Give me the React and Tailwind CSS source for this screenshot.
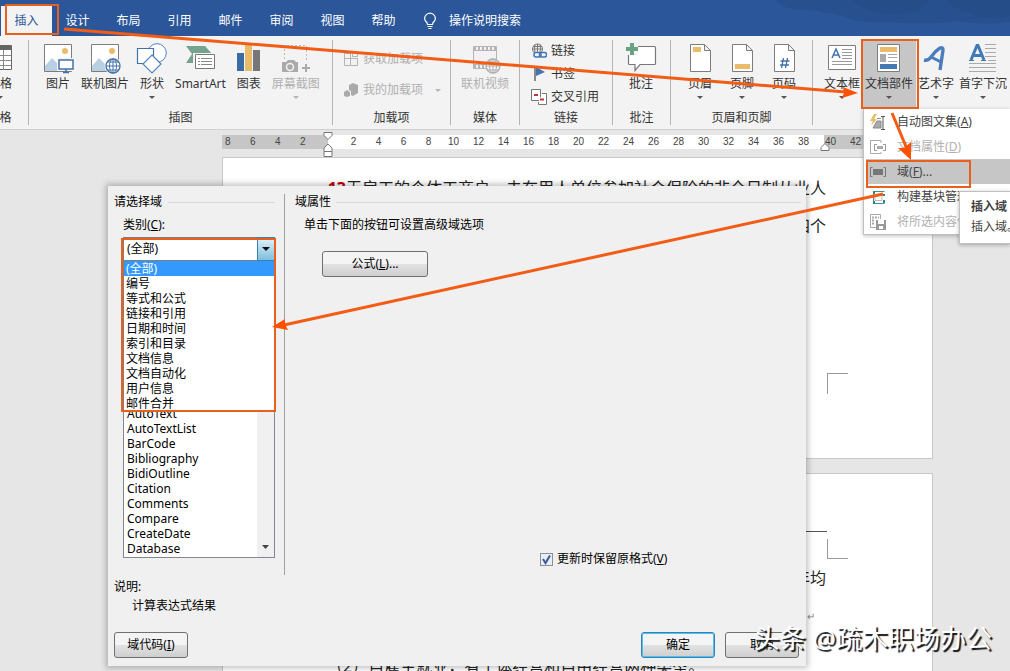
import React from 'react';

const tabs = ['插入', '设计', '布局', '引用', '邮件', '审阅', '视图', '帮助'];

const categories = [
  '(全部)', '编号', '等式和公式', '链接和引用', '日期和时间',
  '索引和目录', '文档信息', '文档自动化', '用户信息', '邮件合并'
];

const fields = [
  'AutoText', 'AutoTextList', 'BarCode', 'Bibliography', 'BidiOutline',
  'Citation', 'Comments', 'Compare', 'CreateDate', 'Database'
];

const rulerMain = Array.from({ length: 19 }, (_, i) => (i + 1) * 2);

function Caret({ dim }) {
  return (
    <svg width="6" height="3" viewBox="0 0 6 3" className="mt-1">
      <path d="M0 0h6L3 3z" fill={dim ? '#b5b5b5' : '#555'} />
    </svg>
  );
}

function Icon({ children }) {
  return (
    <svg width="32" height="32" viewBox="0 0 32 32" fill="none" className="-mx-1 shrink-0">
      {children}
    </svg>
  );
}

function RibbonButton({ icon, label, caret, dim, active }) {
  return (
    <button
      className={`flex flex-col items-center pt-[3px] leading-[17px] whitespace-nowrap ${
        active ? 'bg-[#c6c6c6] px-[3px] -mx-[3px]' : ''
      } ${dim ? 'text-[#b0b0b0]' : 'text-[#333]'}`}
    >
      <Icon>{icon}</Icon>
      <span>{label}</span>
      {caret && <Caret dim={dim} />}
    </button>
  );
}

function Group({ label, className, children }) {
  return (
    <div className={`my-1 flex flex-col ${className}`}>
      <div className="flex h-[68px]">{children}</div>
      <p className="pt-[3px] leading-[14px] text-center text-[#333]">{label}</p>
    </div>
  );
}

function SmallButton({ icon, label, dim, caret }) {
  return (
    <button className={`flex items-center gap-1 leading-4 ${dim ? 'text-[#b0b0b0]' : 'text-[#333]'}`}>
      <svg width="16" height="16" viewBox="0 0 16 16" fill="none">{icon}</svg>
      {label}
      {caret && (
        <svg width="6" height="3" viewBox="0 0 6 3" className="ml-2">
          <path d="M0 0h6L3 3z" fill="#b5b5b5" />
        </svg>
      )}
    </button>
  );
}

const page = <path d="M6.500 1.500h14l6 6v21h-20zM20.500 1.500v6h6" fill="#fff" stroke="#7d7d7d" />;

const icons = {
  table: (
    <>
      <path d="M.5 2.500h27v24h-27z" fill="#fff" stroke="#666" />
      <path d="M1 3h26v4H1z" fill="#666" />
      <path d="M1 12.500h26M1 17.500h26M1 22.500h26M10.500 7v20M19.500 7v20" stroke="#8a8a8a" />
    </>
  ),
  image: (
    <>
      <path d="M2.500 1.500h27v27h-27z" fill="#fff" stroke="#7d7d7d" />
      <circle cx="23" cy="8" r="3" fill="#eabb6a" />
      <path d="M3 28V23l7-8 8 8v5z" fill="#b9d0e4" />
      <path d="M15 15h18v13H15z" fill="#f3f3f3" />
      <path d="M17 17h14v9H17z" fill="#fff" stroke="#4472a8" strokeWidth="1.500" />
      <path d="M24 26v3M21 29.500h6" stroke="#4472a8" strokeWidth="1.500" />
    </>
  ),
  online: (
    <>
      <path d="M2.500 1.500h27v27h-27z" fill="#fff" stroke="#7d7d7d" />
      <circle cx="23" cy="8" r="3" fill="#eabb6a" />
      <path d="M3 28V23l7-8 8 8v5z" fill="#b9d0e4" />
      <circle cx="24" cy="23" r="8.500" fill="#f3f3f3" />
      <circle cx="24" cy="23" r="7" fill="#fff" stroke="#4472a8" strokeWidth="1.300" />
      <path d="M17 23h14M24 16v14M18.500 19h11M18.500 27h11" stroke="#4472a8" />
      <ellipse cx="24" cy="23" rx="3.500" ry="7" stroke="#4472a8" />
    </>
  ),
  shapes: (
    <>
      <circle cx="21" cy="10" r="9.300" fill="#fff" stroke="#4f83bd" />
      <path d="M1.500 5.500h16v15h-16z" fill="#fff" stroke="#4472a8" strokeWidth="1.200" />
      <path d="M16 12l9 9-9 9-9-9z" fill="#fff" stroke="#4f83bd" strokeWidth="1.200" />
    </>
  ),
  smart: (
    <>
      <path d="M2 3h19l7 8-7 9H2l6-9z" fill="#75a38f" />
      <path d="M9 10h22v17H9z" fill="#f3f3f3" />
      <path d="M11.500 11.500h19v14h-19z" fill="#fff" stroke="#777" />
      <path d="M14 15.500h2M14 18.500h2M14 21.500h2M17 15.500h11M17 18.500h11M17 21.500h11" stroke="#888" />
    </>
  ),
  chart: (
    <>
      <path d="M4 10h7v18H4z" fill="#3b6ba3" />
      <path d="M12 2h7v26h-7z" fill="#eabb6a" />
      <path d="M20 7h7v21h-7z" fill="#777" />
    </>
  ),
  camera: (
    <>
      <path d="M4.500 16V2.500h22V19" stroke="#bbb" strokeDasharray="2 2" />
      <path d="M2 19h4l2-2h6l2 2h2v10H2z" fill="#aaa" />
      <circle cx="10" cy="24" r="3.500" fill="#aaa" stroke="#f3f3f3" strokeWidth="1.500" />
      <path d="M26 21v8M22 25h8" stroke="#aaa" strokeWidth="2" />
    </>
  ),
  video: (
    <>
      <path d="M4.500 3.500h23v22h-23z" stroke="#b5b5b5" fill="#f3f1f3" />
      <path d="M5 5.500h23M5 23.500h13" stroke="#b5b5b5" strokeWidth="3" strokeDasharray="2 2" />
      <path d="M5 7.500h23M5 21.500h13" stroke="#b5b5b5" />
      <circle cx="24" cy="23" r="7" fill="#f3f3f3" stroke="#b0b0b0" strokeWidth="1.300" />
      <path d="M17 23h14M24 16v14M18.500 19h11M18.500 27h11" stroke="#b0b0b0" />
      <ellipse cx="24" cy="23" rx="3.500" ry="7" stroke="#b0b0b0" />
    </>
  ),
  comment: (
    <>
      <path d="M3.500 4.500q0-1 1-1h25q1 0 1 1v16q0 1-1 1H15l-5 6v-6H4.500q-1 0-1-1z" fill="#fff" stroke="#777" strokeWidth="1.200" />
      <path d="M1 -2h12v14H1z" fill="#f3f3f3" />
      <path d="M5 0h4v4h4v4H9v4H5V8H1V4h4z" fill="#6aa287" />
    </>
  ),
  header: (
    <>
      {page}
      <path d="M9 4h8v5H9z" fill="#eabb6a" />
    </>
  ),
  footer: (
    <>
      {page}
      <path d="M9 21h15v5H9z" fill="#eabb6a" />
    </>
  ),
  number: (
    <>
      {page}
      <path d="M15.500 15l-2 10M19.500 15l-2 10M12.500 18h9M12 22h9" stroke="#4472a8" strokeWidth="1.300" />
    </>
  ),
  textbox: (
    <>
      <path d="M2.500 2.500h27v24h-27z" fill="#fff" stroke="#7d7d7d" />
      <path d="M6 15L10 6l4 9M7.500 12h5" stroke="#4472a8" strokeWidth="1.500" />
      <path d="M16 6.500h10M16 9.500h10M16 12.500h10M16 15.500h10M6 18.500h20M6 21.500h20" stroke="#999" />
    </>
  ),
  parts: (
    <>
      <path d="M4.500 1.500h22v27h-22z" fill="#fff" stroke="#7d7d7d" />
      <path d="M7 4h17v5H7z" fill="#eabb6a" />
      <path d="M7 11h6v8H7z" fill="#aaa" />
      <path d="M15 11.500h9M15 14.500h9M15 18.500h9" stroke="#aaa" />
      <path d="M7 21h17v5H7z" fill="#4279b5" />
    </>
  ),
  wordart: (
    <>
      <path d="M4 17q4 1 7-3 4-6 9-9 3-1 3 2l-3 20" stroke="#4a7dba" strokeWidth="3.400" />
      <path d="M11 14l10 5" stroke="#4a7dba" strokeWidth="3" />
    </>
  ),
  dropcap: (
    <>
      <path d="M4 17L10 2.500h1L17 17M6 12.500h9" stroke="#4279b5" strokeWidth="3" />
      <path d="M2 17.500h5M14 17.500h5" stroke="#4279b5" />
      <path d="M18 1.500h11M18 5.500h11M18 9.500h11M18 13.500h11M21 17.500h8M2 20.500h27M2 24.500h27M2 28.500h27" stroke="#aaa" />
    </>
  )
};

const menuItems = [
  {
    text: '自动图文集', key: 'A',
    icon: (
      <>
        <path d="M4 0L0 7h3L1 12l6-7H4l3-5z" fill="#eabb6a" />
        <path d="M3 14l4-7h4v7zM7 4.500h4" fill="#aaa" stroke="#888" />
        <path d="M11 2.500h4M11 15.500h4M13 3v12" stroke="#555" />
      </>
    )
  },
  {
    text: '文档属性', key: 'D', dim: true,
    icon: (
      <>
        <path d="M11 4V1.500H.5v13H11V13" stroke="#aaa" />
        <path d="M7 5.500H4.500v6H7M13 5.500h2.500v6H13" stroke="#999" />
        <path d="M7 7h6v3H7z" fill="#aaa" />
      </>
    )
  },
  {
    text: '域', key: 'F', tail: '...', active: true,
    icon: (
      <>
        <path d="M2.500 3.500h-2v9h2M13.500 3.500h2v9h-2" stroke="#777" />
        <path d="M3 5h10v6H3z" fill="#777" />
      </>
    )
  },
  {
    text: '构建基块管理器', key: 'B', tail: '...',
    icon: (
      <>
        <path d="M5 2.500h9.500M5 14.500h9.500M3.500 5v8" stroke="#3f9199" />
        <path d="M3 2h2v3H3zM13 5h2v2h-2zM13 11h2v3h-2zM3 12h2v3H3z" fill="#3c7f86" />
        <path d="M5 5.500h7v6H5z" stroke="#bbb" />
      </>
    )
  },
  {
    text: '将所选内容保存到文档部件库', key: 'S', dim: true,
    icon: (
      <>
        <path d="M6 13.500H.5v-13h10V5" stroke="#aaa" />
        <path d="M2 3.500h7M2 6.500h3M2 9.500h3" stroke="#aaa" strokeWidth="2" strokeDasharray="2 1" />
        <path d="M6 6h10v10H6z" fill="#999" />
        <path d="M8 6h6v4H8zM9 12h4v3H9z" fill="#fff" />
      </>
    )
  }
];

function DialogButton({ children, wide, primary }) {
  return (
    <button
      className={`h-[26px] shrink-0 rounded-[3px] border bg-gradient-to-b from-[#f4f4f4] from-50% via-[#e2e2e2] via-50% to-[#cfcfcf] leading-4 text-black ${
        wide ? 'w-[106px]' : 'w-[74px]'
      } ${primary ? 'border-[#3c7fb1] ring-1 ring-inset ring-[#48c5ee]' : 'border-[#707070]'}`}
    >
      {children}
    </button>
  );
}

function TitleBar() {
  return (
    <header className="relative flex h-9 shrink-0 items-end bg-[#2b579a] text-white">
      <svg width="240" height="24" viewBox="0 0 240 24" className="absolute right-0 top-0">
        <path d="M6 0h234v22q-26 4-50-1-36 4-70 1-30 2-47-6-22-5-35-6-24 1-32-10z" fill="#27508f" />
        <path d="M80 0h78q-4 12-18 12-28 8-60-12zM176 0h64v16q-26 6-42-4-12-2-22-12z" fill="#234a80" opacity=".5" />
      </svg>
      <div role="tablist" className="relative flex pl-px">
        {tabs.map((tab, i) => (
          <button
            key={tab}
            role="tab"
            aria-selected={i === 0}
            className={`h-[30px] w-[51px] ${i === 0 ? 'bg-[#f3f3f3] text-[#2b579a]' : ''}`}
          >
            {tab}
          </button>
        ))}
      </div>
      <button className="relative ml-[14px] flex h-[30px] items-center gap-3">
        <svg width="14" height="18" viewBox="0 0 14 18" fill="none" stroke="#fff" strokeWidth="1.200">
          <path d="M4.500 12.500Q4.500 10.500 2.500 9A5.200 5.200 0 1 1 11.500 9Q9.500 10.500 9.500 12.500zM4.500 14.500h5M5.500 16.500h3" />
        </svg>
        操作说明搜索
      </button>
    </header>
  );
}

function Ribbon() {
  return (
    <div className="flex h-[94px] shrink-0 border-b border-[#d0d0d0] bg-[#f3f3f3]">
      <Group label={<span className="-ml-[29px]">表格</span>} className="w-[29px] border-r border-[#b5b5b5]">
        <div className="-ml-3 flex">
          <RibbonButton icon={icons.table} label="表格" caret />
        </div>
      </Group>
      <Group label="插图" className="w-[304px] border-r border-[#b5b5b5]">
        <div className="flex gap-[11px] pl-[17px]">
          <RibbonButton icon={icons.image} label="图片" />
          <RibbonButton icon={icons.online} label="联机图片" />
          <RibbonButton icon={icons.shapes} label="形状" caret />
          <RibbonButton icon={icons.smart} label="SmartArt" />
          <RibbonButton icon={icons.chart} label="图表" />
          <RibbonButton icon={icons.camera} label="屏幕截图" caret dim />
        </div>
      </Group>
      <Group label="加载项" className="w-[118px] border-r border-[#b5b5b5]">
        <div className="flex flex-col gap-[15px] pl-[10px] pt-[11px]">
          <SmallButton
            dim
            label="获取加载项"
            icon={<path d="M1.500 7.500h13v7h-13zM1.500 7.500v-5h6v12M9.500 1.500h5v4h-5z" stroke="#b5b5b5" />}
          />
          <SmallButton
            dim
            caret
            label="我的加载项"
            icon={<path d="M6 3l4-2 5 2v8l-5 3-2-1V9L6 8zM1 10l3-2 3 2v4l-3 1-3-1z" fill="#aaa" />}
          />
        </div>
      </Group>
      <Group label="媒体" className="w-[69px] border-r border-[#b5b5b5]">
        <div className="flex pl-[10px]">
          <RibbonButton icon={icons.video} label="联机视频" dim />
        </div>
      </Group>
      <Group label="链接" className="w-[93px] border-r border-[#b5b5b5]">
        <div className="flex flex-col gap-[7px] pl-[11px] pt-[3px]">
          <SmallButton
            label="链接"
            icon={
              <>
                <circle cx="6.500" cy="6" r="5" stroke="#777" />
                <path d="M1.500 6h10M6.500 1v9M4 1.500q-1 4 0 8M9 1.500q1 4 0 8M2 3.500h9" stroke="#777" />
                <rect x="3" y="9.500" width="7" height="4.500" rx="2" fill="#f3f3f3" stroke="#3f75b5" strokeWidth="1.500" />
                <rect x="8.500" y="9.500" width="7" height="4.500" rx="2" stroke="#3f75b5" strokeWidth="1.500" />
              </>
            }
          />
          <SmallButton
            label="书签"
            icon={
              <>
                <path d="M4 1v14" stroke="#666" strokeWidth="1.500" />
                <path d="M5 1l9 5-9 4z" fill="#3f75b5" />
              </>
            }
          />
          <SmallButton
            label="交叉引用"
            icon={
              <>
                <path d="M.5.500h9v11h-9z" fill="#fff" stroke="#777" />
                <path d="M11 4.500h4.500v11h-8V13" fill="#fff" stroke="#777" />
                <path d="M3 6h4M9 10.500h4" stroke="#c0392b" strokeWidth="2" />
              </>
            }
          />
        </div>
      </Group>
      <Group label="批注" className="w-[58px] border-r border-[#b5b5b5]">
        <div className="flex pl-4">
          <RibbonButton icon={icons.comment} label="批注" />
        </div>
      </Group>
      <Group label="页眉和页脚" className="w-[142px] border-r border-[#b5b5b5]">
        <div className="flex gap-[18px] pl-[17px]">
          <RibbonButton icon={icons.header} label="页眉" caret />
          <RibbonButton icon={icons.footer} label="页脚" caret />
          <RibbonButton icon={icons.number} label="页码" caret />
        </div>
      </Group>
      <Group label="" className="flex-1">
        <div className="flex gap-[5px] pl-[11px]">
          <RibbonButton icon={icons.textbox} label="文本框" caret />
          <RibbonButton icon={icons.parts} label="文档部件" caret active />
          <RibbonButton icon={icons.wordart} label="艺术字" caret />
          <RibbonButton icon={icons.dropcap} label="首字下沉" caret />
        </div>
      </Group>
    </div>
  );
}

function Ruler() {
  return (
    <div className="relative mt-[5px] flex h-[14px] w-[711px] shrink-0 bg-white text-[10px] leading-[14px] text-[#444] font-['Liberation_Sans',sans-serif]">
      <div className="flex w-[106px] bg-[#c6c6c6] pl-[3px]">
        {[8, 6, 4, 2].map((n) => <span key={n} className="w-[25px]">{n}</span>)}
      </div>
      <div className="flex w-[496px] pl-[13px]">
        {rulerMain.map((n) => <span key={n} className="w-[25px] text-center">{n}</span>)}
      </div>
      <div className="flex flex-1 bg-[#c6c6c6] pl-px">
        {[40, 42, 44].map((n) => <span key={n} className="w-[25px]">{n}</span>)}
      </div>
      <svg width="10" height="26" viewBox="0 0 10 26" className="absolute left-[101px] -top-[3px]" fill="#fff" stroke="#777">
        <path d="M1 .5h8v3l-4 4-4-4zM5 12l4 4v3.500H1V16zM1 19.500h8v5H1z" />
      </svg>
      <svg width="10" height="8" viewBox="0 0 10 8" className="absolute left-[598px] top-2" fill="#fff" stroke="#777">
        <path d="M5 .5l4 4v3H1v-3z" />
      </svg>
    </div>
  );
}

function Document() {
  return (
    <main className="flex flex-1 flex-col bg-[#e6e6e6] pl-[222px] text-[16px] leading-[22px] text-[#222]">
      <Ruler />
      <article className="mt-2 flex h-[302px] w-[711px] shrink-0 flex-col items-end border border-[#c8c8c8] bg-white pt-[19px]">
        <p className="whitespace-nowrap pr-[106px]">
          <b className="text-[#c00000]">13</b>无雇工的个体工商户、未在用人单位参加社会保险的非全日制从业人
        </p>
        <p className="mt-4 pr-[106px]">四个</p>
        <div className="mt-[136px] mr-[84px] h-[21px] w-[21px] border-l border-t border-[#999]" />
      </article>
      <article className="mt-[14px] flex w-[711px] flex-1 flex-col items-end border border-[#c8c8c8] bg-white">
        <div className="mr-[105px] mt-[57px] w-[496px] border-t border-[#555]" />
        <div className="mt-[7px] mr-[84px] h-[20px] w-[21px] border-b border-l border-[#999]" />
        <p className="mt-2 pr-[106px]">年均</p>
        <p className="mt-4 pr-[117px] text-[10px] text-[#888]">↵</p>
        <p className="mt-7 self-start whitespace-nowrap pl-[104px]">（2）自雇主就业，有个体经营和自由经营两种类型。</p>
      </article>
    </main>
  );
}

function FieldDialog() {
  return (
    <section
      role="dialog"
      aria-label="域"
      className="absolute isolate left-[108px] top-[186px] flex w-[698px] flex-col bg-[#f0f0f0] pb-[8px] pt-2 leading-4 text-black shadow-[0_0_6px_2px_rgba(0,0,0,0.25)]"
    >
      <div className="flex h-[381px]">
        <div className="flex w-[177px] flex-col border-r border-[#a0a0a0] pl-[6px]">
          <h2 className="flex items-center gap-[6px] pr-[9px] after:h-px after:flex-1 after:bg-[#d8d8d8]">请选择域</h2>
          <label htmlFor="category" className="ml-[9px] mt-[7px]">类别(<u>C</u>):</label>
          <div className="relative ml-[9px] mt-1 w-[152px]">
            <select
              id="category"
              className="block h-6 w-full appearance-none border border-[#7f7f7f] bg-white pl-[3px] leading-4"
              defaultValue="(全部)"
            >
              <option>(全部)</option>
            </select>
            <span className="pointer-events-none absolute right-0 top-0 flex h-6 w-[18px] items-center justify-center border border-[#3c7fb1] bg-gradient-to-b from-[#dff2fb] to-[#7fbfdd]">
              <svg width="8" height="4" viewBox="0 0 8 4"><path d="M0 0h8L4 4z" fill="#111" /></svg>
            </span>
            <ul role="listbox" aria-label="类别" className="absolute left-0 top-6 z-10 w-full border-l border-[#7f7f7f] bg-white leading-[15px]">
              {categories.map((name, i) => (
                <li
                  key={name}
                  role="option"
                  aria-selected={i === 0}
                  className={`pl-[2px] ${i === 0 ? 'bg-[#3399ff] text-white' : ''}`}
                >
                  {name}
                </li>
              ))}
            </ul>
          </div>
          <div className="ml-[9px] flex h-[297px] w-[152px] border border-[#828790] bg-white leading-[15px]">
            <ul role="listbox" aria-label="域名" className="flex flex-1 flex-col justify-end pb-px pl-[3px]">
              {fields.map((name) => <li key={name} role="option" aria-selected="false">{name}</li>)}
            </ul>
            <div className="flex w-[17px] items-end justify-center bg-[#f0f0f0] pb-2">
              <svg width="7" height="4" viewBox="0 0 7 4"><path d="M0 0h7L3.500 4z" fill="#444" /></svg>
            </div>
          </div>
        </div>
        <div className="flex flex-1 flex-col pl-[10px]">
          <h2 className="flex items-center gap-[5px] pr-[5px] after:h-px after:flex-1 after:bg-[#d8d8d8]">域属性</h2>
          <p className="ml-[9px] mt-[7px]">单击下面的按钮可设置高级域选项</p>
          <div className="ml-[27px] mt-[18px] flex">
            <DialogButton wide>公式(<u>L</u>)...</DialogButton>
          </div>
          <label className="mb-2 ml-[245px] mt-auto flex items-center gap-1">
            <span className="relative h-[13px] w-[13px]">
              <input type="checkbox" defaultChecked className="block h-[13px] w-[13px] appearance-none border border-[#8e8f8f] bg-[#e9eef5]" />
              <svg width="13" height="13" viewBox="0 0 13 13" fill="none" className="pointer-events-none absolute left-0 top-0">
                <path d="M3 6l2.500 4L10 2.500" stroke="#3b5a9a" strokeWidth="2" />
              </svg>
            </span>
            <span>更新时保留原格式(<u>V</u>)</span>
          </label>
        </div>
      </div>
      <p className="mt-1 pl-[6px]">说明:</p>
      <p className="mt-[3px] pl-6">计算表达式结果</p>
      <div className="mt-[18px] flex gap-[10px] pl-[6px] pr-[7px]">
        <DialogButton>域代码(<u>I</u>)</DialogButton>
        <div className="flex-1" />
        <DialogButton primary>确定</DialogButton>
        <DialogButton>取消</DialogButton>
      </div>
    </section>
  );
}

function PartsMenu() {
  return (
    <div role="menu" className="absolute left-[863px] right-0 top-[109px] overflow-hidden border-b border-l border-[#c0c0c0] bg-white pl-[2px] shadow-[0_1px_4px_rgba(0,0,0,0.25)]">
      {menuItems.map((item) => (
        <button
          key={item.key}
          role="menuitem"
          className={`flex h-[25px] w-full items-center gap-[11px] whitespace-nowrap pl-1 ${
            item.active ? 'bg-[#c6c6c6]' : ''
          } ${item.dim ? 'text-[#b0b0b0]' : 'text-[#444]'}`}
        >
          <svg width="16" height="16" viewBox="0 0 16 16" fill="none" className="shrink-0">{item.icon}</svg>
          <span>{item.text}(<u>{item.key}</u>){item.tail}</span>
        </button>
      ))}
    </div>
  );
}

export default function App() {
  return (
    <div className="relative flex h-screen flex-col overflow-hidden text-[12px] font-['Noto_Sans','Noto_Sans_CJK_SC',sans-serif]">
      <TitleBar />
      <Ribbon />
      <Document />
      <FieldDialog />
      <PartsMenu />
      <div role="tooltip" className="absolute left-[959px] right-0 top-[191px] h-[53px] whitespace-nowrap border border-r-0 border-[#c0c0c0] bg-white pl-[11px] pt-[5px] leading-[20px] text-[#444] shadow-[0_1px_4px_rgba(0,0,0,0.3)]">
        <p className="font-bold">插入域</p>
        <p>插入域。</p>
      </div>

      {/* callouts */}
      <div className="pointer-events-none absolute left-[5px] top-1 h-[31px] w-[54px] border-2 border-[#e8601c]" />
      <div className="pointer-events-none absolute left-[861px] top-[39px] h-[70px] w-[58px] border-2 border-[#e8601c]" />
      <div className="pointer-events-none absolute left-[866px] top-[160px] h-[28px] w-[105px] border-2 border-[#e8601c]" />
      <div className="pointer-events-none absolute left-[121px] top-[238px] h-[174px] w-[155px] border-2 border-[#e8601c]" />
      <svg width="1010" height="671" viewBox="0 0 1010 671" className="pointer-events-none absolute left-0 top-0" stroke="#f25c14" strokeWidth="3" fill="#ff5000">
        <path d="M64 29L846 92M892 113l15 36M883 194L284 325" />
        <path d="M858 93l-16 5 2-5-1-6zM911 160l-13-12 6 0 7-6zM272 327l13-8 0 5 3 6z" stroke="none" />
      </svg>

      <p className="pointer-events-none absolute bottom-[13px] right-[18px] whitespace-nowrap text-[26px] leading-[40px] text-white [text-shadow:2px_2px_1px_#111]">
        头条 @疏木职场办公
      </p>
    </div>
  );
}
